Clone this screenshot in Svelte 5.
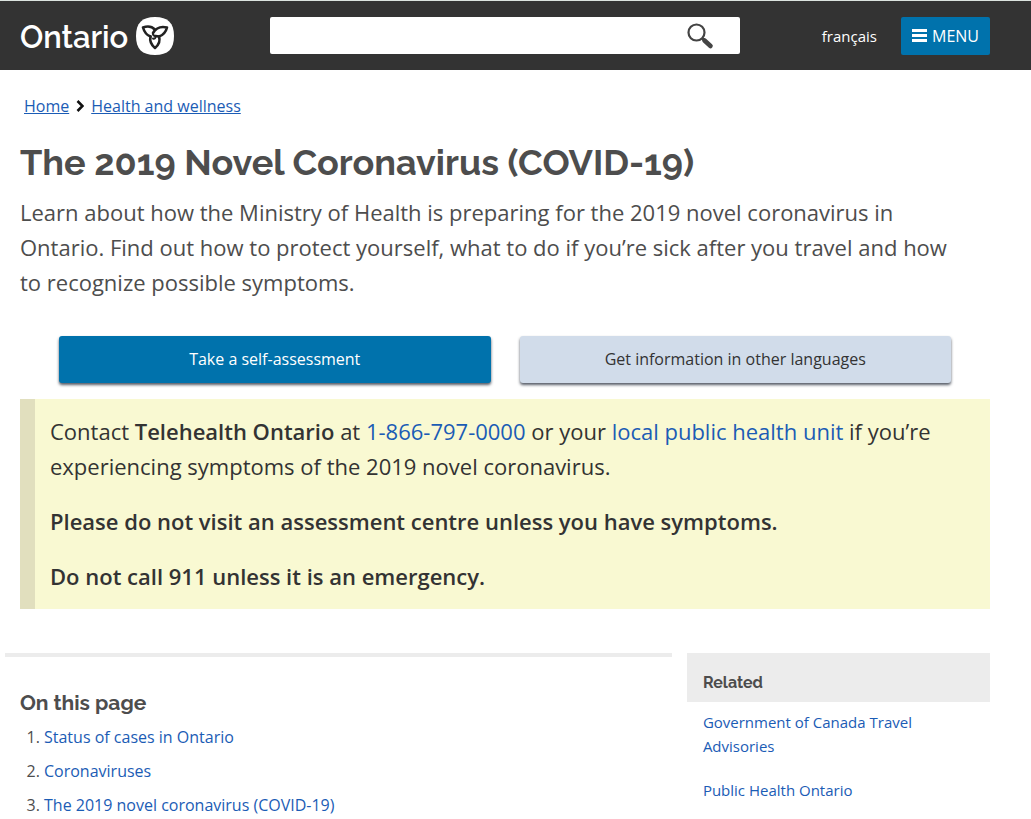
<script lang="ts">
  let search = $state('');

  const sections = [
    { href: '#status', label: 'Status of cases in Ontario' },
    { href: '#coronaviruses', label: 'Coronaviruses' },
    { href: '#covid-19', label: 'The 2019 novel coronavirus (COVID-19)' }
  ];

  const related = [
    { href: '#travel', label: 'Government of Canada Travel Advisories' },
    { href: '#public-health', label: 'Public Health Ontario' }
  ];
</script>

<header>
  <a class="logo" href="#home">
    <span>Ontario</span>
    <svg width="38" height="38" viewBox="0 0 38 38" aria-hidden="true">
      <path fill="#fff" d="M19 0C32 0 38 6 38 19S32 38 19 38 0 32 0 19 6 0 19 0Z" />
      <g fill="none" stroke="#222" stroke-width="2.6" stroke-linejoin="round" stroke-linecap="round">
        <path d="M14.500 19.500C10 18 8 14 7 10.500C11 9 16 9.500 19 12.500" />
        <path d="M17 16C20 11 25 9 31 10.500C30 14.500 27.500 18 23 19.500L19.500 19" />
        <path d="M14.500 19.500C13.500 24 15.500 28 19 31C22.500 28 24.500 24 23 19.500" />
        <path stroke-width="2" d="M17 16C16.500 18 18 19 19.500 19C20 21 18.500 22 17 21.500" />
      </g>
    </svg>
  </a>
  <form class="search" role="search" onsubmit={(e) => e.preventDefault()}>
    <input type="text" aria-label="Search" bind:value={search} />
    <button type="submit" aria-label="Submit search">
      <svg width="28" height="28" viewBox="0 0 28 28" aria-hidden="true">
        <circle cx="10.500" cy="10.500" r="8" fill="none" stroke="#444" stroke-width="2.200" />
        <path d="M16.500 16.500L19 19" stroke="#444" stroke-width="2.600" />
        <path d="M18.500 18.500L24.500 24" stroke="#444" stroke-width="4.600" stroke-linecap="round" />
      </svg>
    </button>
  </form>
  <nav>
    <a href="#fr" lang="fr">français</a>
    <button class="menu" type="button">
      <svg width="15" height="13" viewBox="0 0 15 13" aria-hidden="true">
        <path d="M0 1.500h15M0 6.500h15M0 11.500h15" stroke="#fff" stroke-width="3" />
      </svg>
      MENU
    </button>
  </nav>
</header>

<main>
  <nav class="breadcrumbs" aria-label="Breadcrumb">
    <a href="#home">Home</a>
    <svg width="8" height="12" viewBox="0 0 8 12" aria-hidden="true">
      <path d="M1.500 1L6.500 6L1.500 11" fill="none" stroke="#111" stroke-width="2.600" />
    </svg>
    <a href="#health">Health and wellness</a>
  </nav>

  <h1>The 2019 Novel Coronavirus (COVID-19)</h1>
  <p class="lead">
    Learn about how the Ministry of Health is preparing for the 2019 novel coronavirus in Ontario. Find out how to
    protect yourself, what to do if you’re sick after you travel and how to recognize possible symptoms.
  </p>

  <div class="actions">
    <a class="action primary" href="#assessment">Take a self-assessment</a>
    <a class="action" href="#languages">Get information in other languages</a>
  </div>

  <div class="callout">
    <p>
      Contact <strong>Telehealth Ontario</strong> at <a href="tel:18667970000">1-866-797-0000</a> or your
      <a href="#unit">local public health unit</a> if you’re experiencing symptoms of the 2019 novel coronavirus.
    </p>
    <p><strong>Please do not visit an assessment centre unless you have symptoms.</strong></p>
    <p><strong>Do not call 911 unless it is an emergency.</strong></p>
  </div>

  <div class="columns">
    <section>
      <h2>On this page</h2>
      <ol>
        {#each sections as section}
          <li><a href={section.href}>{section.label}</a></li>
        {/each}
      </ol>
    </section>
    <aside>
      <h3>Related</h3>
      <ul>
        {#each related as item}
          <li><a href={item.href}>{item.label}</a></li>
        {/each}
      </ul>
    </aside>
  </div>
</main>

<style>
  :global(body) {
    background: #fff;
    color: #4d4d4d;
    font: 16px/24px 'Open Sans', sans-serif;
  }

  /* no scrollbar, so the page keeps its full width */
  :global(html) {
    scrollbar-width: none;
  }

  a {
    color: #1b5cb5;
    text-decoration: none;
  }

  h1,
  h2,
  h3 {
    font-family: Raleway, Lato, sans-serif;
    font-weight: 700;
    margin: 0;
  }

  header {
    align-items: center;
    background: #333;
    border-top: 1px solid #dbe3df;
    box-sizing: border-box;
    display: flex;
    height: 70px;
    padding: 0 41px 0 20px;
  }

  .logo {
    align-items: flex-end;
    color: #fff;
    display: flex;
    flex: 0 0 250px;
    font: 600 31px/36px Raleway, Lato, sans-serif;
    gap: 8px;
  }

  .search {
    background: #fff;
    border-radius: 2px;
    display: flex;
    flex: 1 1 470px;
    height: 37px;
    max-width: 470px;
  }

  .search input {
    background: none;
    border: 0;
    flex: 1;
    font: inherit;
    min-width: 0;
    outline: 0;
    padding: 0 12px;
  }

  .search button {
    align-items: center;
    background: none;
    border: 0;
    display: flex;
    padding: 0 26px;
  }

  header nav {
    align-items: center;
    display: flex;
    gap: 24px;
    margin-left: auto;
  }

  header nav a {
    color: #fff;
    font-size: 15px;
  }

  .menu {
    align-items: center;
    background: #0072ac;
    border: 0;
    border-radius: 2px;
    color: #fff;
    display: flex;
    font: inherit;
    gap: 5px;
    height: 38px;
    padding: 0 11px;
  }

  main {
    padding: 24px 41px 0 20px;
  }

  .breadcrumbs {
    align-items: center;
    display: flex;
    gap: 7px;
    padding-left: 4px;
  }

  .breadcrumbs a {
    text-decoration: underline;
  }

  h1 {
    font-size: 36px;
    line-height: 44px;
    padding: 22px 0 11px;
  }

  .lead {
    font-size: 22px;
    line-height: 35px;
    margin: 0;
    padding-right: 20px;
  }

  .actions {
    display: grid;
    gap: 29px;
    grid-template-columns: 1fr 1fr;
    padding: 36px 39px 16px;
  }

  .action {
    background: #d1dcea;
    border-radius: 3px;
    box-shadow: 0 2px 3px #555b66;
    color: #333;
    line-height: 47px;
    text-align: center;
  }

  .action.primary {
    background: #0072ac;
    color: #fff;
  }

  .callout {
    background: #f9f9d2;
    border-left: 15px solid #e1dfbe;
    color: #333;
    display: grid;
    font-size: 22px;
    gap: 20px;
    line-height: 35px;
    padding: 15px;
  }

  .callout p {
    margin: 0;
  }

  strong {
    font-weight: 600;
  }

  .columns {
    align-items: start;
    display: grid;
    gap: 15px;
    grid-template-columns: 11fr 5fr;
    margin: 44px 0 0 -15px;
  }

  section {
    border-top: 4px solid #ececec;
    padding: 32px 0 0 15px;
  }

  h2 {
    font-size: 21px;
    line-height: 28px;
  }

  ol {
    display: grid;
    gap: 10px;
    margin: 8px 0 0;
    padding-left: 24px;
  }

  h3 {
    background: #ececec;
    font-size: 16px;
    line-height: 24px;
    padding: 18px 16px 7px;
  }

  aside ul {
    display: grid;
    font-size: 15px;
    gap: 20px;
    list-style: none;
    margin: 8px 0 0;
    padding: 0 60px 0 16px;
  }
</style>
